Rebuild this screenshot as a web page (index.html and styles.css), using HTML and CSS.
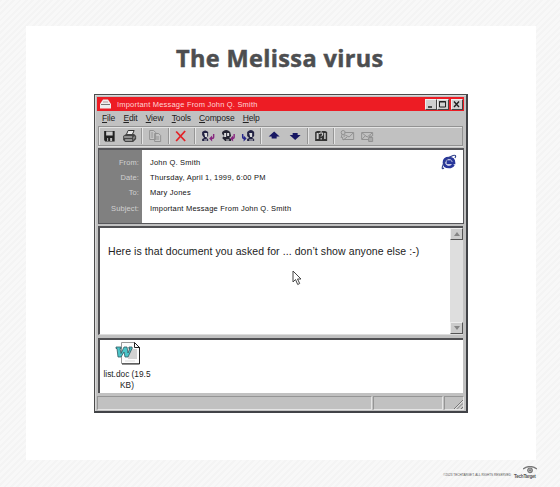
FILE: index.html
```html
<!DOCTYPE html>
<html lang="en">
<head>
<meta charset="utf-8">
<title>The Melissa virus</title>
<link rel="stylesheet" href="styles.css">
</head>
<body>
<main class="sheet">
  <h1>The Melissa virus</h1>
  <section class="window">
    <header class="titlebar">
      <svg class="mail" width="13" height="12" viewBox="0 0 13 12"><path d="M1 6 4 1.500h5L12 6v4.500H1z" fill="#eee"/><path d="M4 4h5" stroke="#b59b9b"/><path d="M2 6.500h9" stroke="#777"/></svg>
      <span class="caption">Important Message From John Q. Smith</span>
      <div class="controls">
        <svg viewBox="0 0 10 9"><path d="M2 7h4" stroke="#222" stroke-width="1.500"/></svg>
        <svg viewBox="0 0 10 9"><path d="M1.500 1.500h6v5.500h-6zM1 2h7" fill="none" stroke="#222"/></svg>
        <svg class="close" viewBox="0 0 10 9"><path d="m2 1.500 5 5.500M7 1.500 2 7" stroke="#222" stroke-width="1.400"/></svg>
      </div>
    </header>
    <nav class="menu">
      <span><u>F</u>ile</span><span><u>E</u>dit</span><span><u>V</u>iew</span><span><u>T</u>ools</span><span><u>C</u>ompose</span><span><u>H</u>elp</span>
    </nav>
    <div class="toolbar">
      <svg viewBox="0 0 20 16"><path d="M5 3h10.500v10.500H6L5 12z" fill="#222"/><path d="M7 3.500h6.500v4H7z" fill="#ccc"/><path d="M8 10h5v3H8z" fill="#bbb"/><path d="M9 10h2v3H9z" fill="#222"/></svg>
      <svg viewBox="0 0 20 16"><path d="m7 7 2-4.500h6l-2 4.500z" fill="#eee" stroke="#333"/><path d="m4 8 3-2h8l2 2v3l-3 3H6l-2-2z" fill="#454545"/><path d="M5 9h8M6 12h7M9 4h4" stroke="#ddd"/><path d="m14 9 2-1v2l-2 2z" fill="#888"/></svg>
      <i></i>
      <svg viewBox="0 0 20 16"><g fill="#c6c6c6" stroke="#929292"><path d="M4.500 2.500h4l2 2v7h-6zM9.500 5.500h4l2 2v6h-6z"/><path d="M6 5h2M6 7h2M6 9h2M11 9h3M11 11h3"/></g></svg>
      <i></i>
      <svg viewBox="0 0 20 16"><path d="m5 3.500 9 9.500M14 3 5 13" stroke="#e32227" stroke-width="1.800"/></svg>
      <i></i>
      <svg viewBox="0 0 20 16"><path d="M4 4q3-3 6 0v4l-2 2 2 1v2H4v-2l2-1-2-3z" fill="#222243"/><path d="M6 5h3v4H7zM6 11.500h3v1H6z" fill="#ddd"/><path d="M15.500 6v3q0 1.500-2 1.500" fill="none" stroke="#87267f" stroke-width="1.400"/><path d="m11 10.500 3-3v6z" fill="#87267f"/></svg>
      <svg viewBox="0 0 20 16"><path d="M4 4q4-4 8 0l1 4-2 2 2 1v2H7l-3-3 2-2-2-2z" fill="#242430"/><path d="M6 5h2v4H6zM9 5h2v3H9zM8 11.500h3v1H8z" fill="#ddd"/><path d="M16 6v3q0 1.500-2 1.500" fill="none" stroke="#87267f" stroke-width="1.400"/><path d="m12 10.500 3-3v6z" fill="#87267f"/></svg>
      <svg viewBox="0 0 20 16"><path d="M9 4q4-4 7 0v4l-2 2 2 1v2H9v-2l2-1-2-2z" fill="#222243"/><path d="M11 5h3v4h-2zM11 11.500h4v1h-4z" fill="#ddd"/><path d="M4.500 6v3q0 1.500 2 1.500" fill="none" stroke="#27278b" stroke-width="1.400"/><path d="m8.500 10.500-3-3v6z" fill="#27278b"/></svg>
      <i></i>
      <svg viewBox="0 0 20 16"><path d="m10 3.500 5.500 5H12.500V10.500h-5V8.500h-3z" fill="#171763"/></svg>
      <svg viewBox="0 0 20 16"><path d="m10 12 5.500-5H12.500V5h-5v2h-3z" fill="#171763"/></svg>
      <i></i>
      <svg viewBox="0 0 20 16"><path d="m4 4 2-1h3l1 1 1-1h3l2 1v9H4z" fill="#333"/><path d="M5.500 5h2v6h-2zM13 5h1.500v6H13z" fill="#ccc"/><path d="M8.500 6V5h3v2L10 8.500M10 10v1.500" fill="none" stroke="#ddd"/></svg>
      <i></i>
      <svg viewBox="0 0 20 16"><g fill="none" stroke="#929292"><path d="M7.500 4.500h9v7h-11V9M8 7l4 2 4-4M6 12l4-3"/><circle cx="6" cy="4.500" r="2"/><path d="m5 6-1 4M7 6v3"/></g></svg>
      <svg viewBox="0 0 20 16"><g fill="none" stroke="#929292"><path d="M12 11.500H4.500v-7h11V8M5 5l5 4 5-4M5 11l3-3"/><path d="M11.500 9.500h4v4h-4zM12.500 9V8h2v1" fill="#aaa"/></g></svg>
    </div>
    <div class="headers">
      <div class="labels"><span>From:</span><span>Date:</span><span>To:</span><span>Subject:</span></div>
      <div class="values"><span>John Q. Smith</span><span>Thursday, April 1, 1999, 6:00 PM</span><span>Mary Jones</span><span>Important Message From John Q. Smith</span></div>
      <svg class="ie" width="16" height="16" viewBox="0 0 16 16"><path d="M12.500 10.500Q11 13 8 13q-5 0-5-4.500T8 4q5 0 5 5H5.500M5.500 7.500h5" fill="none" stroke="#29379b" stroke-width="2.700"/><path d="M3 14Q0 16 2 11 5 4 12 1.500q4-1 2 2.500" fill="none" stroke="#35458e" stroke-width="1.200"/></svg>
    </div>
    <div class="message">
      <p>Here is that document you asked for ... don’t show anyone else :-)</p>
      <div class="scroll">
        <span><svg width="6" height="4"><path d="M0 4 3 0l3 4z" fill="#858585"/></svg></span>
        <span><svg width="6" height="4"><path d="m0 0 3 4 3-4z" fill="#858585"/></svg></span>
      </div>
      <svg class="pointer" width="10" height="16" viewBox="0 0 10 16"><path d="M1 1v11l2.500-2.500 2.200 5 2-1-2.200-4.500H9z" fill="#fff" stroke="#444"/></svg>
    </div>
    <div class="attachments">
      <figure>
        <svg width="26" height="23" viewBox="0 0 26 23"><path d="M6.500.5h13l5 5v16h-18z" fill="#fdfdfd" stroke="#999"/><path d="M19.500.5v5h5zM24.500 5v17H7" fill="none" stroke="#222"/><path d="M13 5h5v2h4v10h-9z" fill="#d2d2d2"/><path d="M10 19h10" stroke="#ddd"/><path d="M1 5h5v1.500H5l1 5L9 5h3l1 6 2-4.500h-1V5h3v1.500L13 15h-3l-1-5-3 5H3L2 6.500H1z" fill="#4bc5c9" stroke="#315a62" stroke-width=".8"/></svg>
        <figcaption>list.doc (19.5<br>KB)</figcaption>
      </figure>
    </div>
    <footer class="status">
      <span></span><span></span>
      <span><svg width="10" height="10"><path d="m1 10 9-9M4.500 10 10 4.500M8 10l2-2" stroke="#777"/><path d="m2 10 8-8M5.500 10 10 5.500" stroke="#eee" stroke-width=".7"/></svg></span>
    </footer>
  </section>
</main>
<footer class="credit">
  <span>©2023 TECHTARGET. ALL RIGHTS RESERVED</span>
  <div class="brand">
    <svg width="14" height="8" viewBox="0 0 14 8"><path d="M0 3Q7-2 14 3" fill="none" stroke="#777" stroke-width="1.300"/><circle cx="7" cy="4.300" r="2.300" fill="#bbb" stroke="#777" stroke-width="1.200"/><circle cx="7" cy="4.300" r=".8" fill="#555"/></svg>
    <b>TechTarget</b>
  </div>
</footer>
</body>
</html>
```
FILE: styles.css
```css
* { box-sizing: border-box; }
body {
  margin: 0;
  height: 487px;
  padding: 26px 24px 0 26px;
  overflow: hidden;
  font-family: "Liberation Sans", sans-serif;
  color: #222;
  background: repeating-linear-gradient(135deg, #f4f4f4 0 2px, #f8f8f8 2px 4.5px);
}
svg { display: block; flex: none; }
.sheet { height: 434px; background: #fff; overflow: hidden; }
h1 {
  margin: 15px 0 0 150px;
  height: 53px;
  font: bold 23.5px/34px "Open Sans", sans-serif;
  letter-spacing: .36px;
  -webkit-text-stroke: .5px #4d4e50;
  color: #4d4e50;
  white-space: nowrap;
}
.window {
  width: 374px;
  height: 319px;
  margin-left: 68px;
  padding: 2px 2px 1px;
  display: flex;
  flex-direction: column;
  background: #c1c1c1;
  border: 1px solid #4b4b4b;
  border-right: 2px solid #414347;
  border-bottom: 2px solid #414347;
  box-shadow: inset 1px 1px #d8d8d8;
}
.titlebar {
  height: 14px;
  display: flex;
  align-items: center;
  background: #ed1c24;
  padding: 0 1px 0 2px;
}
.caption {
  margin-left: 5px;
  color: #ffd5d6;
  font-size: 7.5px;
  letter-spacing: .2px;
  flex: 1;
  white-space: nowrap;
}
.controls { display: flex; }
.controls svg {
  background: #cfcfcf;
  border: 1px solid #eee;
  border-right-color: #444;
  border-bottom-color: #444;
  width: 12px;
  height: 11px;
}
.controls .close { margin-left: 2px; }
.menu {
  height: 15px;
  padding: 1px 0 0 5px;
  display: flex;
  gap: 8.2px;
  font-size: 8.5px;
  letter-spacing: -.13px;
  line-height: 13px;
}
.menu u { text-underline-offset: 1px; }
.toolbar {
  height: 20px;
  margin: 0 1px;
  display: flex;
  align-items: center;
  border: 1px solid #929292;
  box-shadow: inset 1px 1px #e4e4e4, 0 1px #ddd;
}
.toolbar svg { width: 20.3px; height: 16px; }
.toolbar i { width: 2px; height: 16px; margin: 0 1.9px; border-left: 1px solid #969696; border-right: 1px solid #e5e5e5; }
.headers {
  height: 76px;
  margin: 2px 0 0 1px;
  display: flex;
  background: #fff;
  border: 1px solid #56565a;
  border-top-width: 2px;
  font-size: 7.5px;
  line-height: 15.4px;
}
.headers span { display: block; white-space: nowrap; }
.labels { width: 43px; background: #808080; color: #d0d0d0; text-align: right; padding: 4.6px 3px 0 0; letter-spacing: .1px; }
.values { flex: 1; padding: 4.6px 0 0 8px; letter-spacing: .22px; color: #111; }
.ie { margin: 4px 6px 0 0; }
.message {
  position: relative;
  height: 109px;
  margin: 2px 1px 0;
  display: flex;
  background: #fff;
  border: solid #505053;
  border-width: 2px 0 0 2px;
  border-bottom: 1px solid #ddd;
}
.message p {
  flex: 1;
  margin: 16px 0 0 8px;
  font-size: 10.5px;
  letter-spacing: .085px;
  line-height: 14px;
  white-space: nowrap;
}
.pointer { position: absolute; left: 192px; top: 42px; }
.scroll { width: 13px; display: flex; flex-direction: column; justify-content: space-between; background: #dedede; }
.scroll span {
  height: 12px;
  display: grid;
  place-items: center;
  background: #ccc;
  border: 1px solid #eee;
  border-right-color: #555;
  border-bottom-color: #555;
}
.attachments {
  height: 55px;
  margin: 3px 1px 0;
  background: #fff;
  border: solid #505053;
  border-width: 2px 0 0 2px;
}
figure { margin: 2px 0 0; width: 54px; }
figure svg { margin-left: 15px; }
figcaption { margin-top: 4px; text-align: center; font-size: 8.3px; line-height: 10.5px; white-space: nowrap; }
.status { height: 14px; margin: 3px 0 0; display: grid; grid-template-columns: 275px 70px 1fr; gap: 1px; }
.status span { border: 1px solid #959595; border-right-color: #e5e5e5; border-bottom-color: #e5e5e5; display: flex; align-items: end; justify-content: end; }
.credit { height: 26px; padding-top: 6px; display: flex; justify-content: flex-end; color: #555; font-size: 3.1px; }
.credit > span { margin: 7px 3px 0 0; white-space: nowrap; line-height: 4px; }
.brand { width: 22px; }
.brand svg { margin-left: 9px; }
.brand b { display: block; font: bold 4.6px/6px "Liberation Sans", sans-serif; letter-spacing: -.25px; white-space: nowrap; }
```
